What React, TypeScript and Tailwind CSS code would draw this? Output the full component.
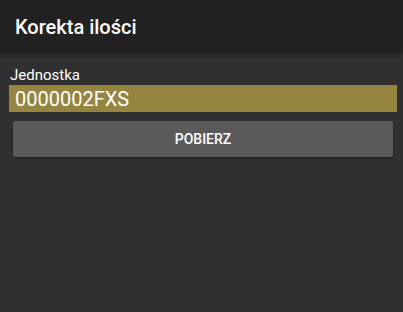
export default function App() {
  return (
    <div
      className="w-[403px] h-[312px] bg-[#303030] flex flex-col"
      style={{ fontFamily: 'Roboto, "Liberation Sans", sans-serif' }}
    >
      {/* Toolbar */}
      <div className="h-[53px] bg-[#212121] flex items-center px-[15px] shadow-[0_2px_3px_rgba(0,0,0,0.25)]">
        <h1 className="text-[20px] font-medium text-white leading-none">Korekta ilości</h1>
      </div>

      {/* Content */}
      <div className="flex flex-col pt-[13px] px-[9px]">
        <label className="text-[15px] text-white leading-[19px] pl-[1px]">Jednostka</label>
        <div className="h-[27px] bg-[#968540] flex items-center px-[6px] mr-[-3px]">
          <span className="text-[20px] text-white leading-none">0000002FXS</span>
        </div>
        <button className="mt-[9px] ml-[4px] mr-[1px] h-[36px] bg-[#5a5a5a] rounded-[2px] shadow-[0_1px_2px_rgba(0,0,0,0.4)] text-white text-[14px] font-medium">
          POBIERZ
        </button>
      </div>
    </div>
  );
}
